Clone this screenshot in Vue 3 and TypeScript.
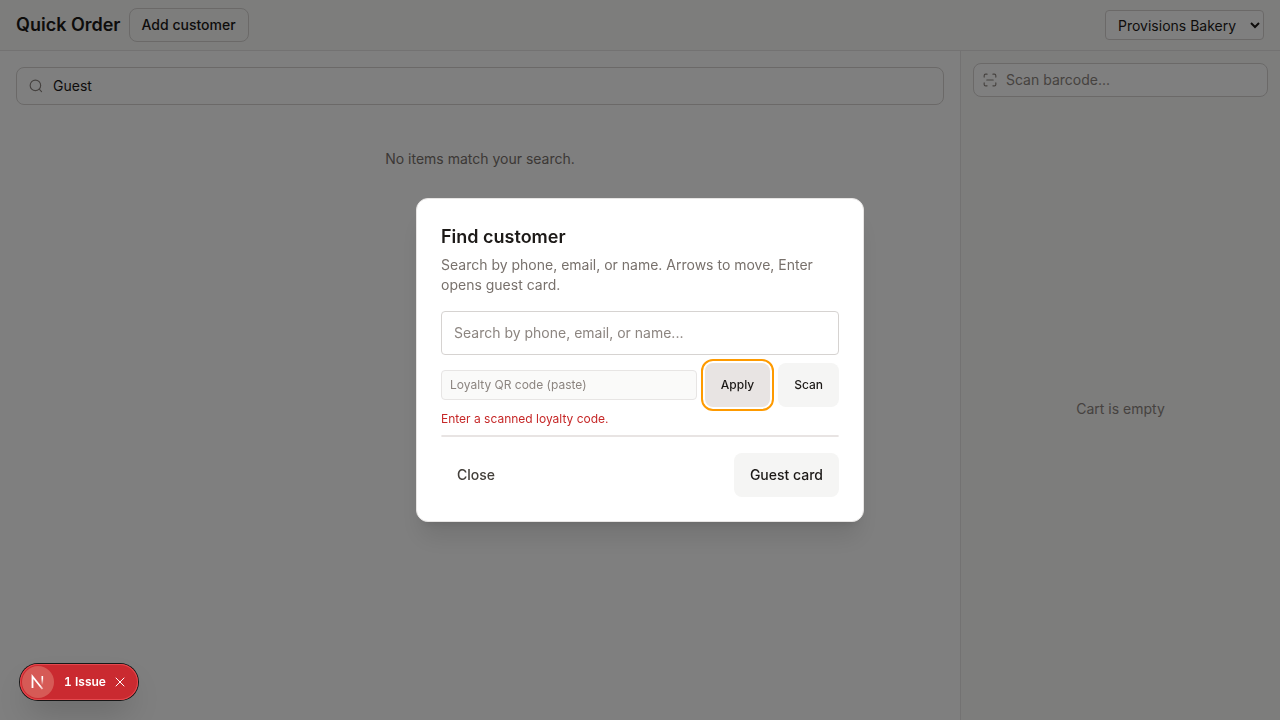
<script setup lang="ts">
import { ref } from 'vue'

const itemQuery = ref('Guest')
const barcode = ref('')
const location = ref('Provisions Bakery')
const customerQuery = ref('')
const loyaltyCode = ref('')
const loyaltyError = ref('Enter a scanned loyalty code.')
const dialogOpen = ref(true)
const issueVisible = ref(true)

function applyCode(): void {
  loyaltyError.value = loyaltyCode.value.trim() ? '' : 'Enter a scanned loyalty code.'
}
</script>

<template>
  <div class="page">
    <header class="topbar">
      <div class="topbar-left">
        <h1>Quick Order</h1>
        <button type="button" class="outline-btn" @click="dialogOpen = true">Add customer</button>
      </div>
      <select v-model="location" class="location" aria-label="Location">
        <option>Provisions Bakery</option>
      </select>
    </header>

    <div class="body">
      <main class="catalog">
        <label class="field search">
          <svg class="icon" viewBox="0 0 24 24" aria-hidden="true">
            <circle cx="11" cy="11" r="9" />
            <path d="m21.5 21.5-4-4" />
          </svg>
          <input v-model="itemQuery" type="text" aria-label="Search items" />
        </label>
        <p class="no-items">No items match your search.</p>
      </main>

      <aside class="cart">
        <div class="scan-area">
          <label class="field scan">
            <svg class="icon" viewBox="0 0 24 24" aria-hidden="true">
              <path d="M2 7V4.500a2.500 2.500 0 0 1 2.500-2.500H7M17 2h2.500a2.500 2.500 0 0 1 2.500 2.500V7M22 17v2.500a2.500 2.500 0 0 1-2.500 2.500H17M7 22H4.500a2.500 2.500 0 0 1-2.500-2.500V17M6.500 12h11" />
            </svg>
            <input v-model="barcode" type="text" placeholder="Scan barcode..." aria-label="Scan barcode" />
          </label>
        </div>
        <p class="cart-empty">Cart is empty</p>
      </aside>
    </div>

    <div v-if="dialogOpen" class="overlay">
      <section class="dialog" role="dialog" aria-modal="true" aria-labelledby="dialog-title">
        <h2 id="dialog-title">Find customer</h2>
        <p class="description">Search by phone, email, or name. Arrows to move, Enter opens guest card.</p>
        <input
          v-model="customerQuery"
          class="customer-input"
          type="text"
          placeholder="Search by phone, email, or name..."
          aria-label="Search customers"
        />
        <div class="loyalty-row">
          <input
            v-model="loyaltyCode"
            class="loyalty-input"
            type="text"
            placeholder="Loyalty QR code (paste)"
            aria-label="Loyalty QR code"
          />
          <button type="button" class="soft-btn active" @click="applyCode">Apply</button>
          <button type="button" class="soft-btn">Scan</button>
        </div>
        <p class="error" role="alert">{{ loyaltyError }}</p>
        <div class="results"></div>
        <footer class="actions">
          <button type="button" class="ghost-btn" @click="dialogOpen = false">Close</button>
          <button type="button" class="soft-btn">Guest card</button>
        </footer>
      </section>
    </div>

    <div v-if="issueVisible" class="issue-badge">
      <button type="button" class="logo-btn" aria-label="Open developer tools">
        <svg viewBox="0 0 32 32" aria-hidden="true">
          <defs>
            <linearGradient id="stem-fade" x1="0" y1="10" x2="0" y2="19" gradientUnits="userSpaceOnUse">
              <stop offset="0.300" stop-color="#fff" />
              <stop offset="1" stop-color="#fff" stop-opacity="0" />
            </linearGradient>
            <linearGradient id="diagonal-fade" x1="15" y1="16" x2="21" y2="23" gradientUnits="userSpaceOnUse">
              <stop offset="0.500" stop-color="#fff" />
              <stop offset="1" stop-color="#fff" stop-opacity="0.500" />
            </linearGradient>
          </defs>
          <path d="M10.500 22V10.500L20.500 23" fill="none" stroke="url(#diagonal-fade)" stroke-width="1.800" />
          <rect x="19.500" y="10" width="1.600" height="9" fill="url(#stem-fade)" />
        </svg>
      </button>
      <button type="button" class="issue-text">1 Issue</button>
      <button type="button" class="issue-close" aria-label="Dismiss" @click="issueVisible = false">
        <svg viewBox="0 0 12 12" aria-hidden="true"><path d="m2 2 8 8M10 2l-8 8" /></svg>
      </button>
    </div>
  </div>
</template>

<style>
body {
  margin: 0;
}
</style>

<style scoped>
.page {
  display: flex;
  flex-direction: column;
  min-height: 100vh;
  background: #fff;
  color: #1c1917;
  font-family: Inter, "Liberation Sans", sans-serif;
  font-size: 14px;
  line-height: 20px;
}
.page * {
  box-sizing: border-box;
}
h1,
h2,
p {
  margin: 0;
}
button,
input,
select {
  margin: 0;
  font: inherit;
  color: inherit;
}
button {
  border: 0;
  cursor: pointer;
}
.topbar {
  display: flex;
  align-items: center;
  justify-content: space-between;
  padding: 8px 16px;
  background: #fafaf9;
  border-bottom: 1px solid #e7e5e4;
}
.topbar-left {
  display: flex;
  align-items: center;
  gap: 8px;
}
h1,
h2 {
  font-size: 18px;
  line-height: 28px;
  font-weight: 600;
}
.outline-btn {
  padding: 6px 12px;
  background: transparent;
  border: 1px solid #d6d3d1;
  border-radius: 8px;
  font-weight: 500;
}
.location {
  min-width: 159px;
  height: 30px;
  padding: 0 8px;
  background: #fff;
  border: 1px solid #d6d3d1;
  border-radius: 4px;
}
.body {
  display: flex;
  flex: 1;
}
.catalog {
  flex: 1;
  padding: 16px;
}
.field {
  display: flex;
  align-items: center;
  border: 1px solid #d6d3d1;
  border-radius: 8px;
  background: #fff;
}
.field input {
  flex: 1;
  min-width: 0;
  padding: 0;
  border: 0;
  outline: 0;
  background: transparent;
}
.icon {
  flex: none;
  width: 14px;
  height: 14px;
  fill: none;
  stroke: #8c8580;
  stroke-width: 2;
  stroke-linecap: round;
}
.search {
  height: 38px;
  gap: 10px;
  padding: 0 12px;
}
.no-items {
  padding-top: 44px;
  text-align: center;
  color: #78716c;
}
.cart {
  display: flex;
  flex-direction: column;
  width: 320px;
  background: #fafaf9;
  border-left: 1px solid #e7e5e4;
}
.scan-area {
  padding: 12px 12px 0;
}
.scan {
  height: 34px;
  gap: 9px;
  padding: 0 9px;
}
input::placeholder {
  color: #8c8580;
  opacity: 1;
}
.cart-empty {
  display: flex;
  flex: 1;
  align-items: center;
  justify-content: center;
  color: #8c8580;
}
.overlay {
  position: fixed;
  inset: 0;
  display: flex;
  align-items: center;
  justify-content: center;
  padding: 16px;
  background: rgba(0, 0, 0, 0.5);
}
.dialog {
  width: 100%;
  max-width: 448px;
  padding: 24px;
  background: #fff;
  border: 1px solid #e7e5e4;
  border-radius: 12px;
  box-shadow: 0 20px 25px -5px rgba(0, 0, 0, 0.1), 0 8px 10px -6px rgba(0, 0, 0, 0.1);
}
.description {
  margin-top: 4px;
  color: #78716c;
}
.customer-input {
  display: block;
  width: 100%;
  height: 44px;
  margin-top: 16px;
  padding: 0 12px 2px;
  border: 1px solid #d6d3d1;
  border-radius: 4px;
}
.loyalty-row {
  display: flex;
  align-items: center;
  gap: 8px;
  margin-top: 8px;
  font-size: 12px;
  line-height: 16px;
}
.loyalty-input {
  flex: 1;
  min-width: 0;
  height: 30px;
  padding: 0 8px 2px;
  background: #fafaf9;
  border: 1px solid #e7e5e4;
  border-radius: 4px;
}
.soft-btn,
.ghost-btn {
  height: 44px;
  padding: 0 16px;
  border-radius: 8px;
  font-weight: 500;
}
.soft-btn {
  background: #f5f5f4;
}
.soft-btn.active {
  background: #e8e4e3;
  outline: 2px solid #fe9a00;
  outline-offset: 2px;
}
.ghost-btn {
  background: transparent;
  color: #44403b;
}
.error {
  margin-top: 4px;
  min-height: 16px;
  font-size: 12px;
  line-height: 16px;
  color: #c62828;
}
.results {
  margin-top: 8px;
  border: 1px solid #e8e4e3;
  border-radius: 4px;
}
.actions {
  display: flex;
  justify-content: space-between;
  margin-top: 16px;
}
.issue-badge {
  position: fixed;
  left: 20px;
  bottom: 20px;
  display: flex;
  align-items: center;
  height: 36px;
  padding: 2px;
  box-sizing: border-box;
  border-radius: 18px;
  background: #ca2a30;
  color: #fff;
  box-shadow: 0 0 0 1px #171717, inset 0 0 0 1px #e5484d, 0 16px 32px -8px rgba(0, 0, 0, 0.24);
}
.issue-badge button {
  padding: 0;
  background: transparent;
}
.issue-badge .logo-btn {
  display: flex;
  width: 32px;
  height: 32px;
  border-radius: 50%;
  background: #d65a56;
}
.logo-btn svg {
  width: 32px;
  height: 32px;
}
.issue-badge .issue-text {
  padding: 0 8px 0 10px;
  font-size: 12px;
  font-weight: 600;
  font-variant-numeric: tabular-nums;
}
.issue-close {
  display: flex;
  margin-right: 10px;
}
.issue-close svg {
  width: 12px;
  height: 12px;
  fill: none;
  stroke: #fff;
  stroke-width: 1;
  stroke-linecap: round;
}
</style>
